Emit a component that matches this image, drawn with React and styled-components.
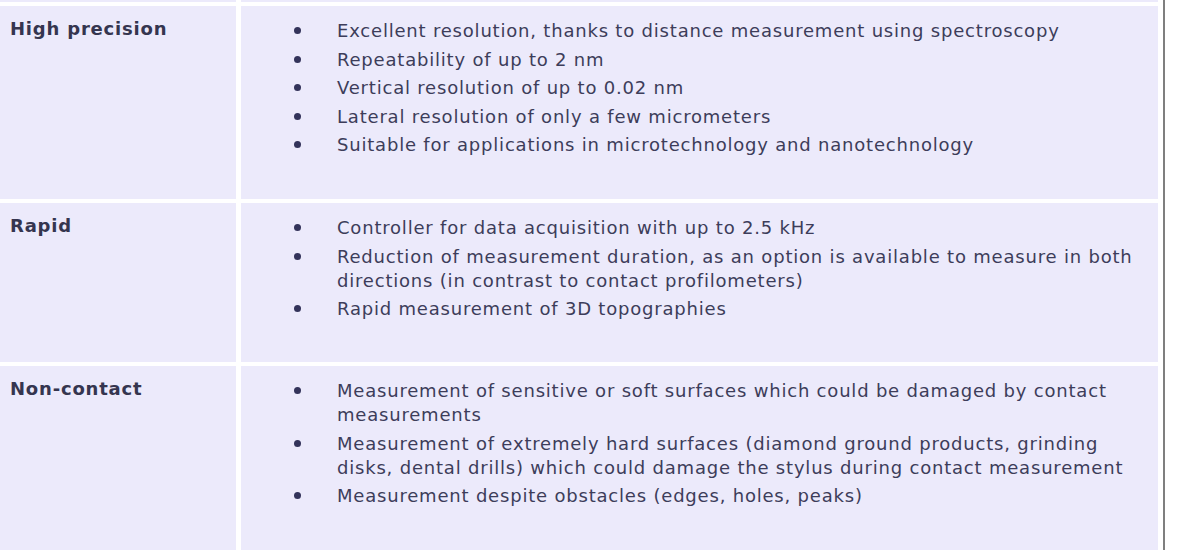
import React from "react";
import styled, { createGlobalStyle } from "styled-components";

const GlobalStyle = createGlobalStyle`
  body {
    margin: 0;
    background: #ffffff;
    font-family: "DejaVu Sans", Verdana, sans-serif;
  }
`;

const Frame = styled.div`
  width: 1163px;
  height: 550px;
  overflow: hidden;
  border-right: 2px solid #7f7f7f;
`;

const Table = styled.div`
  display: grid;
  grid-template-columns: 236px 917px;
  column-gap: 5px;
  row-gap: 4px;
  width: 1158px;
`;

const Cell = styled.div`
  background: #eceafb;
  color: #3d3d5a;
  font-size: 18px;
  letter-spacing: 0.8px;
  line-height: 24px;
  padding: ${(p) => (p.$stub ? "0" : `13px 10px ${p.$bottom || 42}px 10px`)};
  height: ${(p) => (p.$stub ? "2px" : "auto")};
`;

const Label = styled.div`
  font-weight: bold;
  color: #35354f;
  margin-top: -2px;
`;

const List = styled.ul`
  list-style: none;
  margin: 0;
  padding: 0 0 0 43px;
  display: flex;
  flex-direction: column;
  gap: 4.5px;
`;

const Item = styled.li`
  display: flex;
  align-items: flex-start;
  gap: 36px;
`;

const Dot = styled.span`
  flex: none;
  width: 7px;
  height: 7px;
  margin-top: 8px;
  border-radius: 50%;
  background: #33335a;
`;

const rows = [
  {
    label: "High precision",
    bottom: 42,
    items: [
      "Excellent resolution, thanks to distance measurement using spectroscopy",
      "Repeatability of up to 2 nm",
      "Vertical resolution of up to 0.02 nm",
      "Lateral resolution of only a few micrometers",
      "Suitable for applications in microtechnology and nanotechnology",
    ],
  },
  {
    label: "Rapid",
    bottom: 41,
    items: [
      "Controller for data acquisition with up to 2.5 kHz",
      "Reduction of measurement duration, as an option is available to measure in both directions (in contrast to contact profilometers)",
      "Rapid measurement of 3D topographies",
    ],
  },
  {
    label: "Non-contact",
    bottom: 80,
    items: [
      "Measurement of sensitive or soft surfaces which could be damaged by contact measurements",
      "Measurement of extremely hard surfaces (diamond ground products, grinding disks, dental drills) which could damage the stylus during contact measurement",
      "Measurement despite obstacles (edges, holes, peaks)",
    ],
  },
];

export default function App() {
  return (
    <Frame>
      <GlobalStyle />
      <Table>
        <Cell $stub />
        <Cell $stub />
        {rows.map((row) => (
          <React.Fragment key={row.label}>
            <Cell $bottom={row.bottom}>
              <Label>{row.label}</Label>
            </Cell>
            <Cell $bottom={row.bottom}>
              <List>
                {row.items.map((text) => (
                  <Item key={text}>
                    <Dot />
                    <span>{text}</span>
                  </Item>
                ))}
              </List>
            </Cell>
          </React.Fragment>
        ))}
      </Table>
    </Frame>
  );
}
